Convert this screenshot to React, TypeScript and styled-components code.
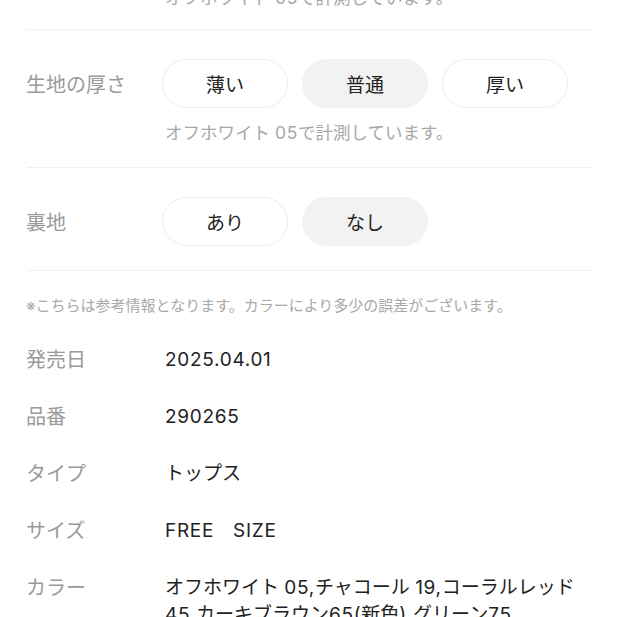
import React from "react";
import styled, { createGlobalStyle } from "styled-components";

const Global = createGlobalStyle`
  html, body { margin: 0; padding: 0; background: #ffffff; }
  body {
    font-family: Inter, "Noto Sans CJK JP", sans-serif;
    -webkit-font-smoothing: antialiased;
    overflow: hidden;
  }
`;

const Page = styled.div`
  width: 617px;
  height: 617px;
  overflow: hidden;
  padding: 0 25px 0 27px;
  box-sizing: border-box;
`;

const Note = styled.div<{ $top?: number }>`
  margin-top: ${(p) => p.$top ?? 0}px;
  padding-left: 138px;
  font-size: 17.5px;
  line-height: 24px;
  color: #a8a8a8;
`;

const Latin = styled.span`
  letter-spacing: 0.7px;
`;

const Divider = styled.div<{ $top: number }>`
  margin-top: ${(p) => p.$top}px;
  height: 1px;
  background: #efefef;
`;

const OptionRow = styled.div<{ $top: number }>`
  margin-top: ${(p) => p.$top}px;
  display: flex;
  align-items: center;
`;

const OptionLabel = styled.div`
  width: 136px;
  margin-left: -1px;
  font-size: 20px;
  color: #9a9a9a;
`;

const Options = styled.div`
  display: flex;
  gap: 14px;
`;

const Pill = styled.div<{ $selected?: boolean }>`
  width: 126px;
  height: 49px;
  box-sizing: border-box;
  border-radius: 25px;
  border: 1px solid ${(p) => (p.$selected ? "#f2f2f2" : "#ececec")};
  background: ${(p) => (p.$selected ? "#f2f2f2" : "#ffffff")};
  display: flex;
  align-items: center;
  justify-content: center;
  font-size: 19px;
  color: #222222;
`;

const SmallNote = styled.div`
  margin-top: 25px;
  margin-left: -1px;
  font-size: 15px;
  line-height: 20px;
  color: #a8a8a8;
  white-space: nowrap;
`;

const Specs = styled.div`
  margin-top: 30px;
  display: flex;
  flex-direction: column;
  gap: 29px;
`;

const SpecRow = styled.div`
  display: flex;
  align-items: flex-start;
`;

const SpecLabel = styled.div`
  width: 139px;
  margin-left: -1px;
  flex-shrink: 0;
  font-size: 20px;
  line-height: 28px;
  color: #9a9a9a;
`;

const SpecValue = styled.div`
  max-width: 420px;
  font-size: 19px;
  line-height: 27px;
  color: #222222;
  white-space: pre-wrap;
`;

function Mixed({ text }: { text: string }) {
  const parts = text.split(/([\x21-\x7e]+)/).filter((s) => s.length > 0);
  return (
    <>
      {parts.map((s, i) =>
        /^[\x21-\x7e]+$/.test(s) ? <Latin key={i}>{s}</Latin> : <React.Fragment key={i}>{s}</React.Fragment>
      )}
    </>
  );
}

const specs: [string, string][] = [
  ["発売日", "2025.04.01"],
  ["品番", "290265"],
  ["タイプ", "トップス"],
  ["サイズ", "FREE\u3000SIZE"],
  ["カラー", "オフホワイト 05,チャコール 19,コーラルレッド45,カーキブラウン65(新色),グリーン75"],
];

const measured = "オフホワイト 05で計測しています。";

export default function App() {
  return (
    <Page>
      <Global />
      <Note $top={-14}><Mixed text={measured} /></Note>
      <Divider $top={19} />
      <OptionRow $top={29}>
        <OptionLabel>生地の厚さ</OptionLabel>
        <Options>
          <Pill>薄い</Pill>
          <Pill $selected>普通</Pill>
          <Pill>厚い</Pill>
        </Options>
      </OptionRow>
      <Note $top={13}><Mixed text={measured} /></Note>
      <Divider $top={22} />
      <OptionRow $top={29}>
        <OptionLabel>裏地</OptionLabel>
        <Options>
          <Pill>あり</Pill>
          <Pill $selected>なし</Pill>
        </Options>
      </OptionRow>
      <Divider $top={24} />
      <SmallNote>※こちらは参考情報となります。カラーにより多少の誤差がございます。</SmallNote>
      <Specs>
        {specs.map(([k, v]) => (
          <SpecRow key={k}>
            <SpecLabel>{k}</SpecLabel>
            <SpecValue><Mixed text={v} /></SpecValue>
          </SpecRow>
        ))}
      </Specs>
    </Page>
  );
}
